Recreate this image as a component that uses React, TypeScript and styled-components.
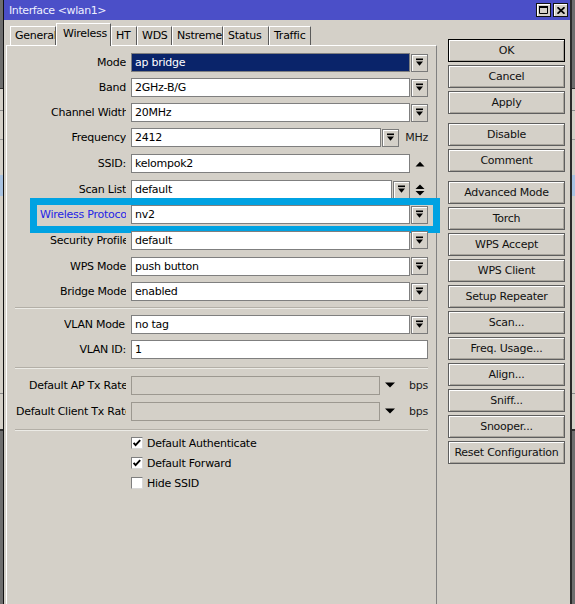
import styled, { createGlobalStyle } from 'styled-components';

const GlobalStyle = createGlobalStyle`
    html, body {
        margin: 0;
        padding: 0;
    }
    body {
        background: #d4d0c8;
        font-family: "DejaVu Sans", Verdana, sans-serif;
        font-size: 11px;
        letter-spacing: -0.25px;
        color: #000;
    }
`

const Screen = styled('div')`
    display: flex;
    width: 575px;
    height: 604px;
    overflow: hidden;
`

// strips of the window lying behind this one
const Backdrop = styled('div')<{ $side: 'left' | 'right' }>`
    flex: none;
    width: 3px;
    background: linear-gradient(to bottom,
        #6e6e6e 0 88px, #303030 88px 89px, #d4d0c8 89px 110px, #8a8a8a 110px 111px,
        #d4d0c8 111px 139px, #9a9a9a 139px 140px, #d4d0c8 140px 175px, #a9c3e2 175px 196px,
        #d4d0c8 196px 393px, #8a8a8a 393px 394px, #d4d0c8 394px 429px, #303030 429px 431px,
        #6e6e6e 431px);
    border-left: ${p => p.$side === 'right' ? '2px solid #2b2b2b' : 'none'};
    border-right: ${p => p.$side === 'left' ? '1px solid #111' : 'none'};
`

const Window = styled('div')`
    flex: 1;
    display: flex;
    flex-direction: column;
    background: #d4d0c8;
`

const TitleBar = styled('div')`
    height: 20px;
    flex: none;
    display: flex;
    align-items: center;
    justify-content: space-between;
    padding: 0 2px 0 5px;
    background: #4b4fc8;
`

const TitleText = styled('span')`
    color: #eef0ff;
    letter-spacing: -0.4px;
`

const TitleButtons = styled('div')`
    display: flex;
    gap: 2px;
`

const TitleButton = styled('div')`
    width: 15px;
    height: 14px;
    box-sizing: border-box;
    border: 1px solid #111;
    background: #d4d0c8;
    box-shadow: inset 1px 1px #fff;
    display: flex;
    align-items: center;
    justify-content: center;
`

const Body = styled('div')`
    flex: 1;
    display: flex;
    gap: 11px;
    padding: 0 5px 0 2px;
`

const LeftColumn = styled('div')`
    width: 431px;
    flex: none;
    display: flex;
    flex-direction: column;
    padding-top: 3px;
`

const TabStrip = styled('div')`
    height: 22px;
    display: flex;
    align-items: flex-end;
    padding-left: 4px;
`

const Tab = styled('div')<{ $w: number; $active?: boolean }>`
    width: ${p => p.$w}px;
    height: ${p => p.$active ? 23 : 19}px;
    margin-bottom: ${p => p.$active ? -1 : 0}px;
    position: ${p => p.$active ? 'relative' : 'static'};
    z-index: ${p => p.$active ? 1 : 0};
    flex: none;
    box-sizing: border-box;
    padding-left: ${p => p.$active ? 6 : 4}px;
    line-height: ${p => p.$active ? 20 : 17}px;
    background: #d4d0c8;
    border-top: 1px solid #fff;
    border-left: 1px solid #fff;
    border-right: 1px solid #5a5a5a;
    white-space: nowrap;
    overflow: hidden;
`

const Panel = styled('div')`
    flex: 1;
    display: flex;
    flex-direction: column;
    padding-top: 4px;
    border-top: 1px solid #fff;
    border-left: 1px solid #fff;
    border-right: 1px solid #808080;
`

const Row = styled('div')<{ $h?: number }>`
    position: relative;
    height: ${p => p.$h ?? 25}px;
    flex: none;
    display: flex;
    align-items: center;
`

const LabelCell = styled('div')`
    width: 119px;
    margin-right: 5px;
    flex: none;
    display: flex;
    justify-content: flex-end;
`

const Label = styled('span')<{ $w?: number; $accent?: boolean }>`
    ${p => p.$w ? `width: ${p.$w}px;` : ''}
    white-space: nowrap;
    overflow: hidden;
    color: ${p => p.$accent ? '#2424e6' : '#000'};
`

const FieldArea = styled('div')`
    width: 297px;
    flex: none;
    display: flex;
    align-items: center;
    gap: 1px;
`

const Input = styled('div')<{ $variant?: 'selected' | 'disabled' }>`
    flex: 1;
    height: 19px;
    box-sizing: border-box;
    padding: 0 3px;
    line-height: 17px;
    border: 1px solid ${p => p.$variant === 'disabled' ? '#9c9890' : '#7f7f7f'};
    background: ${p => p.$variant === 'selected' ? '#0a246a' : p.$variant === 'disabled' ? '#d4d0c8' : '#fff'};
    color: ${p => p.$variant === 'selected' ? '#fff' : '#000'};
    white-space: nowrap;
    overflow: hidden;
`

const DropButton = styled('div')`
    width: 17px;
    height: 18px;
    flex: none;
    box-sizing: border-box;
    border: 1px solid #7a7a7a;
    box-shadow: inset 1px 1px #fff;
    background: #d4d0c8;
    display: flex;
    align-items: center;
    justify-content: center;
`

const Slot = styled('div')<{ $w: number; $end?: boolean }>`
    width: ${p => p.$w}px;
    flex: none;
    display: flex;
    align-items: center;
    justify-content: ${p => p.$end ? 'flex-end' : 'center'};
    color: #1a1a1a;
`

const Separator = styled('div')<{ $pt: number; $pb: number }>`
    flex: none;
    padding: ${p => p.$pt}px 8px ${p => p.$pb}px;
    &::before {
        content: '';
        display: block;
        border-top: 1px solid #b3afa7;
        border-bottom: 1px solid #ecebe6;
    }
`

const Highlight = styled('div')`
    position: absolute;
    left: 23px;
    top: -4px;
    width: 410px;
    height: 35px;
    box-sizing: border-box;
    border: 7px solid #00a2e2;
    pointer-events: none;
`

const CheckBox = styled('div')`
    width: 12px;
    height: 12px;
    flex: none;
    box-sizing: border-box;
    margin-right: 4px;
    border: 1px solid #7f7f7f;
    border-right-color: #d8d8d8;
    border-bottom-color: #d8d8d8;
    background: #fff;
    display: flex;
    align-items: center;
    justify-content: center;
`

const RightColumn = styled('div')`
    width: 117px;
    flex: none;
    display: flex;
    flex-direction: column;
    padding-top: 19px;
`

const ButtonGroup = styled('div')<{ $mt?: number }>`
    display: flex;
    flex-direction: column;
    gap: 3px;
    margin-top: ${p => p.$mt ?? 0}px;
`

const ActionButton = styled('div')<{ $primary?: boolean }>`
    height: 23px;
    box-sizing: border-box;
    border: 1px solid ${p => p.$primary ? '#000' : '#5e5e5e'};
    box-shadow: inset 1px 1px #fff, inset -1px -1px #a8a49c;
    background: #d4d0c8;
    display: flex;
    align-items: center;
    justify-content: center;
    white-space: nowrap;
    color: #111;
`

const DropIcon = () => (
    <svg width="9" height="9" viewBox="0 0 9 9">
        <rect x="1" y="0.5" width="7" height="1.6" fill="#000" />
        <path d="M1 3.5h7L4.5 7.8z" fill="#000" />
    </svg>
)

const UpIcon = () => (
    <svg width="10" height="6" viewBox="0 0 10 6">
        <path d="M0.5 5.5L5 0.8l4.5 4.7z" fill="#000" />
    </svg>
)

const UpDownIcon = () => (
    <svg width="10" height="12" viewBox="0 0 10 12">
        <path d="M0.5 5L5 0.6 9.5 5z" fill="#000" />
        <path d="M0.5 7L5 11.4 9.5 7z" fill="#000" />
    </svg>
)

const DownIcon = () => (
    <svg width="10" height="6" viewBox="0 0 10 6">
        <path d="M0 0.5h10L5 5.5z" fill="#000" />
    </svg>
)

const CheckIcon = () => (
    <svg width="10" height="10" viewBox="0 0 10 10">
        <path d="M1.6 4.8l2 2.3 4.6-5" fill="none" stroke="#000" strokeWidth="1.9" />
    </svg>
)

interface SelectProps {
    label: string;
    value: string;
    h?: number;
    w?: number;
    accent?: boolean;
    selected?: boolean;
    children?: React.ReactNode;
}

const SelectRow = ({ label, value, h, w, accent, selected, children }: SelectProps) => (
    <Row $h={h}>
        <LabelCell><Label $w={w} $accent={accent}>{label}</Label></LabelCell>
        <FieldArea>
            <Input $variant={selected ? 'selected' : undefined}>{value}</Input>
            <DropButton><DropIcon /></DropButton>
        </FieldArea>
        {children}
    </Row>
)

const tabs = [
    { name: 'General', w: 46 },
    { name: 'Wireless', w: 55, active: true },
    { name: 'HT', w: 26 },
    { name: 'WDS', w: 35 },
    { name: 'Nstreme', w: 51 },
    { name: 'Status', w: 46 },
    { name: 'Traffic', w: 42 },
]

const buttonGroups = [
    { mt: 0, items: ['OK', 'Cancel', 'Apply'] },
    { mt: 9, items: ['Disable', 'Comment'] },
    { mt: 9, items: ['Advanced Mode', 'Torch', 'WPS Accept', 'WPS Client', 'Setup Repeater', 'Scan...', 'Freq. Usage...', 'Align...', 'Sniff...', 'Snooper...', 'Reset Configuration'] },
]

const checks = [
    { label: 'Default Authenticate', on: true },
    { label: 'Default Forward', on: true },
    { label: 'Hide SSID', on: false },
]

const App = () => {
    return (
        <Screen>
            <GlobalStyle />
            <Backdrop $side="left" />
            <Window>
                <TitleBar>
                    <TitleText>Interface &lt;wlan1&gt;</TitleText>
                    <TitleButtons>
                        <TitleButton>
                            <svg width="9" height="8" viewBox="0 0 9 8">
                                <path d="M0.5 0.5h8v7h-8z" fill="none" stroke="#000" />
                                <rect x="0" y="0" width="9" height="2" fill="#000" />
                            </svg>
                        </TitleButton>
                        <TitleButton>
                            <svg width="8" height="7" viewBox="0 0 8 7">
                                <path d="M0.5 0.3l7 6.4M7.5 0.3l-7 6.4" stroke="#000" strokeWidth="1.8" />
                            </svg>
                        </TitleButton>
                    </TitleButtons>
                </TitleBar>
                <Body>
                    <LeftColumn>
                        <TabStrip>
                            {tabs.map(t => <Tab key={t.name} $w={t.w} $active={t.active}>{t.name}</Tab>)}
                        </TabStrip>
                        <Panel>
                            <SelectRow label="Mode" value="ap bridge" selected />
                            <SelectRow label="Band" value="2GHz-B/G" />
                            <SelectRow label="Channel Width:" w={75} value="20MHz" />
                            <Row>
                                <LabelCell><Label>Frequency</Label></LabelCell>
                                <FieldArea>
                                    <Input>2412</Input>
                                    <DropButton><DropIcon /></DropButton>
                                    <Slot $w={28} $end>MHz</Slot>
                                </FieldArea>
                            </Row>
                            <Row $h={27}>
                                <LabelCell><Label>SSID:</Label></LabelCell>
                                <FieldArea>
                                    <Input>kelompok2</Input>
                                    <Slot $w={17}><UpIcon /></Slot>
                                </FieldArea>
                            </Row>
                            <Row>
                                <LabelCell><Label>Scan List</Label></LabelCell>
                                <FieldArea>
                                    <Input>default</Input>
                                    <DropButton><DropIcon /></DropButton>
                                    <Slot $w={17}><UpDownIcon /></Slot>
                                </FieldArea>
                            </Row>
                            <SelectRow label="Wireless Protocol:" w={86} value="nv2" accent>
                                <Highlight />
                            </SelectRow>
                            <SelectRow label="Security Profile:" w={76} value="default" h={26} />
                            <SelectRow label="WPS Mode" value="push button" h={26} />
                            <SelectRow label="Bridge Mode:" w={66} value="enabled" />
                            <Separator $pt={3} $pb={3} />
                            <SelectRow label="VLAN Mode:" w={62} value="no tag" />
                            <Row>
                                <LabelCell><Label>VLAN ID:</Label></LabelCell>
                                <FieldArea><Input>1</Input></FieldArea>
                            </Row>
                            <Separator $pt={5} $pb={3} />
                            {['Default AP Tx Rate:', 'Default Client Tx Rate:'].map((label, i) => (
                                <Row key={label} $h={26}>
                                    <LabelCell><Label $w={i === 0 ? 97 : 110}>{label}</Label></LabelCell>
                                    <FieldArea>
                                        <Input $variant="disabled" />
                                        <Slot $w={18}><DownIcon /></Slot>
                                        <Slot $w={28} $end>bps</Slot>
                                    </FieldArea>
                                </Row>
                            ))}
                            <Separator $pt={5} $pb={2} />
                            {checks.map(c => (
                                <Row key={c.label} $h={20}>
                                    <LabelCell />
                                    <CheckBox>{c.on && <CheckIcon />}</CheckBox>
                                    <span>{c.label}</span>
                                </Row>
                            ))}
                        </Panel>
                    </LeftColumn>
                    <RightColumn>
                        {buttonGroups.map((g, gi) => (
                            <ButtonGroup key={gi} $mt={g.mt}>
                                {g.items.map(item => <ActionButton key={item} $primary={item === 'OK'}>{item}</ActionButton>)}
                            </ButtonGroup>
                        ))}
                    </RightColumn>
                </Body>
            </Window>
            <Backdrop $side="right" />
        </Screen>
    );
};

export default App;
